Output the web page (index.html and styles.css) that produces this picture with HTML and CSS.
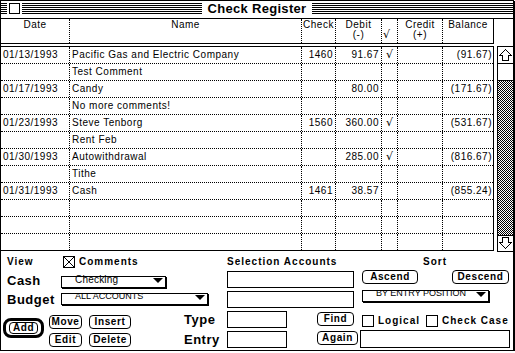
FILE: index.html
```html
<!DOCTYPE html>
<html lang="en">
<head>
  <meta charset="UTF-8">
  <title>Check Register</title>
  <link rel="stylesheet" href="styles.css">
</head>
<body>

<div class="window">
  <div class="titlebar">
    <div class="side">
      <span class="stripes lead"></span>
      <span class="closebox"></span>
      <span class="stripes"></span>
    </div>
    <h1 class="title">Check Register</h1>
    <div class="side">
      <span class="stripes"></span>
    </div>
  </div>

  <div class="colhead">
    <div>Date</div>
    <div>Name</div>
    <div>Check</div>
    <div>Debit<br>(-)</div>
    <div class="tick"><br><span class="mark">√</span></div>
    <div>Credit<br>(+)</div>
    <div>Balance</div>
  </div>

  <div class="main">
    <div class="ledger">
      <div class="row"><div>01/13/1993</div><div>Pacific Gas and Electric Company</div><div class="num">1460</div><div class="num">91.67</div><div class="mark">√</div><div></div><div class="num">(91.67)</div></div>
      <div class="row"><div></div><div>Test Comment</div><div></div><div></div><div></div><div></div><div></div></div>
      <div class="row"><div>01/17/1993</div><div>Candy</div><div></div><div class="num">80.00</div><div></div><div></div><div class="num">(171.67)</div></div>
      <div class="row"><div></div><div>No more comments!</div><div></div><div></div><div></div><div></div><div></div></div>
      <div class="row"><div>01/23/1993</div><div>Steve Tenborg</div><div class="num">1560</div><div class="num">360.00</div><div class="mark">√</div><div></div><div class="num">(531.67)</div></div>
      <div class="row"><div></div><div>Rent Feb</div><div></div><div></div><div></div><div></div><div></div></div>
      <div class="row"><div>01/30/1993</div><div>Autowithdrawal</div><div></div><div class="num">285.00</div><div class="mark">√</div><div></div><div class="num">(816.67)</div></div>
      <div class="row"><div></div><div>Tithe</div><div></div><div></div><div></div><div></div><div></div></div>
      <div class="row"><div>01/31/1993</div><div>Cash</div><div class="num">1461</div><div class="num">38.57</div><div></div><div></div><div class="num">(855.24)</div></div>
      <div class="row"><div></div><div></div><div></div><div></div><div></div><div></div><div></div></div>
      <div class="row"><div></div><div></div><div></div><div></div><div></div><div></div><div></div></div>
      <div class="row"><div></div><div></div><div></div><div></div><div></div><div></div><div></div></div>
    </div>

    <div class="scroll">
      <div class="arrow">
        <svg width="15" height="16" viewBox="0 0 15 16"><polygon points="7.5,2.5 13.5,8.5 10.5,8.5 10.5,13.5 4.5,13.5 4.5,8.5 1.5,8.5" fill="#fff" stroke="#000" shape-rendering="crispEdges"/></svg>
      </div>
      <div class="thumb"></div>
      <div class="track"></div>
      <div class="arrow down">
        <svg width="15" height="15" viewBox="0 0 15 15"><polygon points="7.5,12.5 13.5,6.5 10.5,6.5 10.5,1.5 4.5,1.5 4.5,6.5 1.5,6.5" fill="#fff" stroke="#000" shape-rendering="crispEdges"/></svg>
      </div>
    </div>
  </div>

  <div class="panel">
    <!-- row 1 -->
    <div class="viewline">
      <span class="lbl view">View</span>
      <span class="checkbox"><svg width="10" height="10" viewBox="0 0 10 10"><path d="M0 0L10 10M10 0L0 10" stroke="#000" shape-rendering="crispEdges"/></svg></span>
      <span class="lbl after-box">Comments</span>
    </div>
    <div class="lbl heading">Selection Accounts</div>
    <div class="lbl heading sort">Sort</div>

    <!-- row 2 -->
    <div class="acctline">
      <span class="lbl big name cash">Cash</span>
      <div class="popup cash-pop"><span>Checking</span><span class="caret"></span></div>
    </div>
    <div class="textbox long"></div>
    <div class="sortbtns">
      <button class="btn ascend">Ascend</button>
      <button class="btn descend">Descend</button>
    </div>

    <!-- row 3 -->
    <div class="acctline">
      <span class="lbl big name budget">Budget</span>
      <div class="popup caps budget-pop"><span>ALL ACCOUNTS</span><span class="caret"></span></div>
    </div>
    <div class="textbox long"></div>
    <div class="popup caps sort-pop"><span>BY ENTRY POSITION</span><span class="caret"></span></div>

    <!-- rows 4 and 5 -->
    <div class="btnblock">
      <div class="default"><button class="btn add">Add</button></div>
      <div class="btngrid">
        <button class="btn">Move</button>
        <button class="btn">Insert</button>
        <button class="btn">Edit</button>
        <button class="btn">Delete</button>
      </div>
    </div>
    <div class="lbl big fieldlbl">Type</div>
    <div class="findline">
      <div class="textbox short"></div>
      <button class="btn find">Find</button>
    </div>
    <div class="checks">
      <span class="checkbox"></span>
      <span class="lbl after-box">Logical</span>
      <span class="checkbox second"></span>
      <span class="lbl after-box">Check Case</span>
    </div>

    <div class="lbl big fieldlbl">Entry</div>
    <div class="findline">
      <div class="textbox short"></div>
      <button class="btn again">Again</button>
    </div>
    <div class="textbox field"></div>
  </div>
</div>

</body>
</html>
```

FILE: styles.css
```css
* {
  box-sizing: border-box;
}

body {
  margin: 0;
  font-family: "Liberation Sans", Arial, sans-serif;
  font-size: 10px;
  letter-spacing: 0.5px;
  color: #000;
  background: #fff;
}

.window {
  width: 514px;
  height: 351px;
  border: 1px solid #000;
  box-shadow: 1px 1px 0 #000;
  display: flex;
  flex-direction: column;
}

/* title bar */
.titlebar {
  flex: none;
  height: 18px;
  padding-top: 2px;
  border-bottom: 1px solid #000;
  display: grid;
  grid-template-columns: 1fr auto 1fr;
  align-items: start;
}

.side {
  display: flex;
}

.stripes {
  flex: 1;
  height: 11px;
  background: repeating-linear-gradient(#000 0 1px, #fff 1px 2px);
}

.stripes.lead {
  flex: none;
  width: 6px;
}

.closebox {
  width: 11px;
  height: 11px;
  margin: 0 2px;
  border: 1px solid #000;
}

.title {
  margin: 0;
  padding: 0 6px;
  font-size: 13px;
  line-height: 11px;
  letter-spacing: 0.3px;
  font-weight: bold;
}

/* column headings */
.colhead {
  flex: none;
  width: 493px;
  height: 25px;
  margin-bottom: 2px;
  border-right: 1px solid #000;
  border-bottom: 1px solid #000;
  display: grid;
  grid-template-columns: 69px 232px 34px 46px 16px 45px 1fr;
  text-align: center;
  line-height: 10px;
}

.colhead > div {
  padding-top: 1px;
  border-right: 1px dotted #000;
}

.colhead > div:last-child {
  border-right: 0;
}

.colhead .tick {
  text-align: left;
  padding-left: 1px;
}

/* ledger */
.main {
  flex: none;
  height: 206px;
  display: flex;
  align-items: flex-start;
}

.ledger {
  width: 493px;
  border: 1px solid #000;
  border-left: 0;
}

.row {
  display: grid;
  grid-template-columns: 69px 232px 34px 46px 16px 45px 1fr;
  height: 17px;
  border-bottom: 1px dotted #000;
  line-height: 15px;
}

.row:last-child {
  height: 16px;
  border-bottom: 0;
}

.row > div {
  padding: 0 2px;
  border-right: 1px dotted #000;
  white-space: nowrap;
}

.row > div:last-child {
  border-right: 0;
  padding-right: 1px;
}

.num {
  text-align: right;
}

.mark {
  text-align: center;
  font-family: "DejaVu Sans", sans-serif;
  font-size: 11px;
  letter-spacing: 0;
}

/* scroll bar */
.scroll {
  margin-left: 3px;
  width: 16px;
  height: 206px;
  border: 1px solid #000;
  border-right: 0;
  display: flex;
  flex-direction: column;
}

.arrow,
.thumb {
  flex: none;
  height: 17px;
  border-bottom: 1px solid #000;
}

.arrow svg {
  display: block;
}

.track {
  flex: 1;
  background: repeating-conic-gradient(#000 0 25%, #fff 0 50%) 0 0 / 2px 2px;
}

.arrow.down {
  height: 16px;
  border-bottom: 0;
  border-top: 1px solid #000;
}

/* bottom panel */
.panel {
  flex: 1;
  display: grid;
  grid-template-columns: 177px 43px 133px 1fr;
  grid-template-rows: 18px 20px 20px 20px 20px;
  align-items: start;
  padding: 0 3px 0 6px;
}

.lbl {
  font-weight: bold;
  font-size: 10px;
  line-height: 12px;
  letter-spacing: 1px;
  white-space: nowrap;
}

.lbl.big {
  font-size: 13px;
  line-height: 14px;
  letter-spacing: 0.5px;
}

.viewline {
  grid-column: span 2;
  margin-top: 4px;
  display: flex;
  align-items: center;
}

.view {
  width: 56px;
}

.after-box {
  margin-left: 4px;
}

.heading {
  margin-top: 4px;
}

.heading.sort {
  text-align: center;
}

.acctline {
  grid-column: span 2;
  display: flex;
  align-items: flex-start;
}

.name {
  width: 54px;
}

.cash {
  margin-top: 4px;
}

.budget {
  margin-top: 3px;
}

.checkbox {
  flex: none;
  width: 12px;
  height: 12px;
  border: 1px solid #000;
}

.checkbox svg {
  display: block;
}

.checkbox.second {
  margin-left: 6px;
}

/* popup menus */
.popup {
  height: 12px;
  border: 1px solid #000;
  box-shadow: 1px 1px 0 #000;
  padding: 0 2px 0 13px;
  display: flex;
  justify-content: space-between;
  align-items: flex-start;
  line-height: 5px;
  letter-spacing: 0.2px;
  white-space: nowrap;
}

.popup.caps {
  font-size: 9px;
  letter-spacing: 0;
}

.caret {
  margin-top: 1px;
  width: 0;
  height: 0;
  border-left: 5px solid transparent;
  border-right: 5px solid transparent;
  border-top: 5px solid #000;
}

.cash-pop {
  width: 105px;
  margin-top: 6px;
}

.budget-pop {
  width: 147px;
  margin-top: 3px;
}

.sort-pop {
  width: 127px;
  margin-left: 2px;
}

/* text fields */
.textbox {
  height: 17px;
  margin-top: 1px;
  border: 1px solid #000;
}

.textbox.long {
  width: 127px;
}

.textbox.short {
  width: 60px;
}

.textbox.field {
  width: 150px;
  height: 18px;
  margin-top: 0;
}

/* buttons */
.btn {
  height: 14px;
  padding: 0;
  border: 1px solid #000;
  border-radius: 4px;
  background: #fff;
  color: #000;
  font-family: inherit;
  font-size: 10px;
  font-weight: bold;
  letter-spacing: 0.6px;
  line-height: 12px;
  text-align: center;
}

.sortbtns {
  display: flex;
  justify-content: space-between;
  padding: 0 1px 0 2px;
}

.ascend {
  width: 56px;
}

.descend {
  width: 57px;
}

.btnblock {
  grid-row: span 2;
  margin-left: -4px;
  display: flex;
  align-items: flex-start;
}

.default {
  margin-top: 8px;
  padding: 1px 3px;
  border: 3px solid #000;
  border-radius: 8px;
}

.btn.add {
  display: block;
  width: 29px;
  height: 12px;
  line-height: 10px;
}

.btngrid {
  margin: 5px 0 0 5px;
  display: grid;
  grid-template-columns: 33px 42px;
  grid-auto-rows: 14px;
  gap: 4px 7px;
}

.fieldlbl {
  margin-top: 3px;
}

.findline {
  display: flex;
  align-items: flex-start;
}

.find {
  width: 37px;
  margin: 2px 0 0 30px;
}

.again {
  width: 41px;
  margin: 1px 0 0 30px;
}

.checks {
  margin-top: 5px;
  padding-left: 2px;
  display: flex;
  align-items: center;
}
```
